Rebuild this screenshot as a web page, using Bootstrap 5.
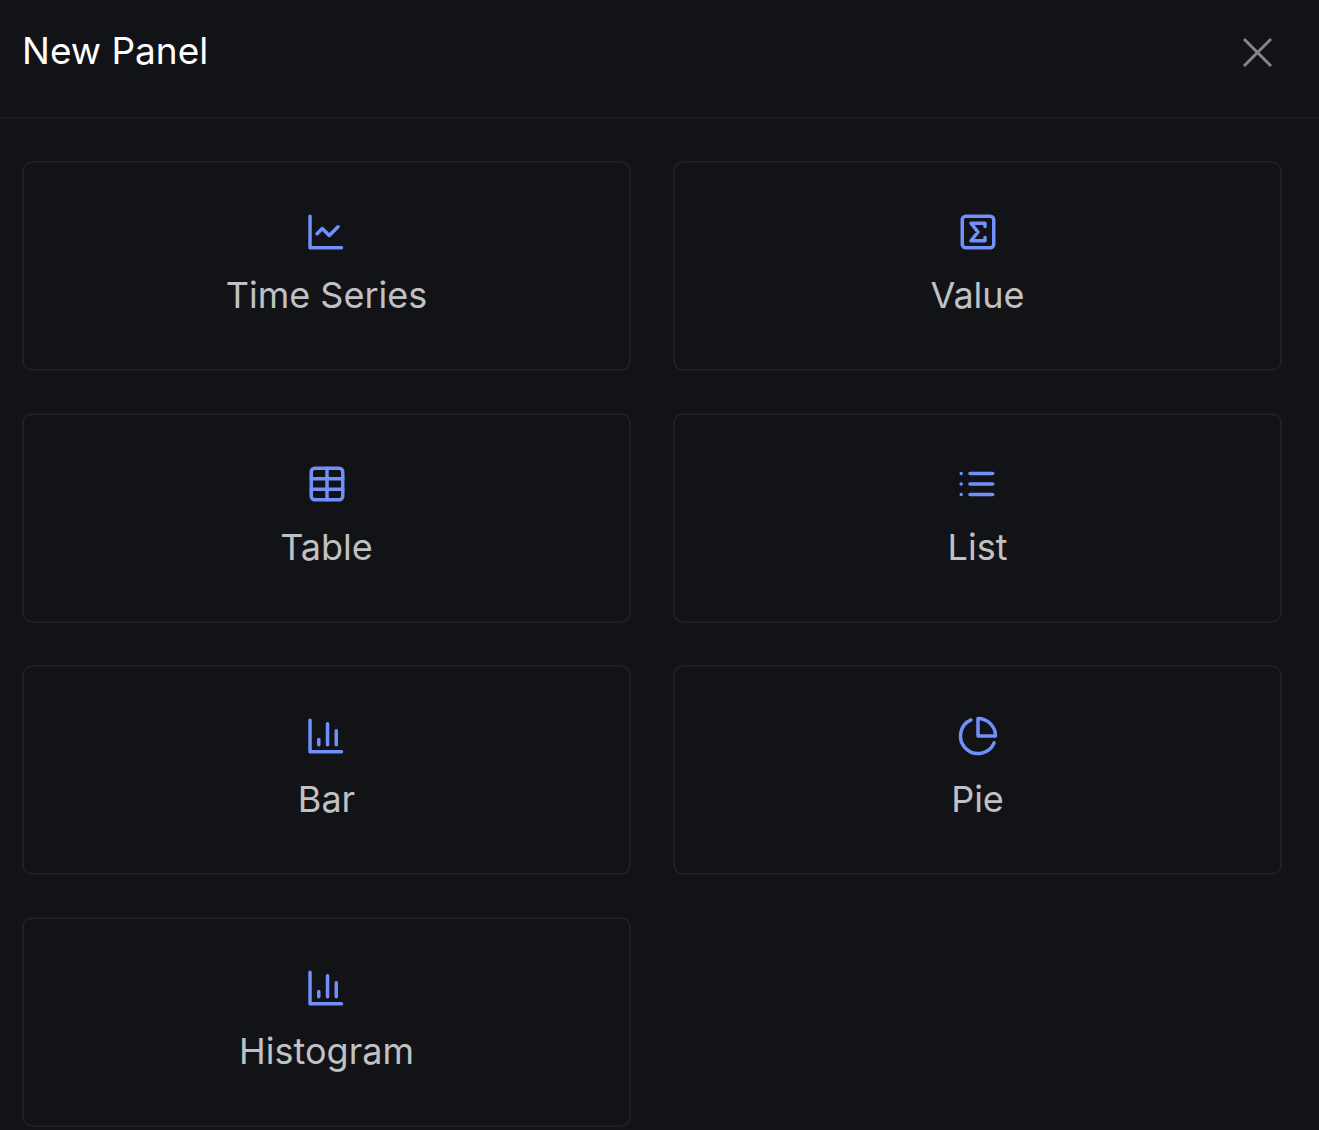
<!DOCTYPE html>
<html lang="en">
<head>
<meta charset="utf-8">
<meta name="viewport" content="width=device-width, initial-scale=1">
<title>New Panel</title>
<link href="https://cdn.jsdelivr.net/npm/bootstrap@5.3.0/dist/css/bootstrap.min.css" rel="stylesheet">
<style>
  body { background: #121317; color: #c0c1c3; font-family: Inter, sans-serif; font-size: 36px; line-height: 52px; }
  .panel-head { padding: 25px 36px 40px 22px; border-bottom: 2px solid #1b1c20; }
  .panel-title { color: #fff; font-size: 37px; line-height: 52px; font-weight: 400; }
  .close-btn { color: #85868a; padding: 8px; }
  .close-btn:hover { color: #fff; }
  .panel-grid { padding: 42px 37px 2px 22px; }
  .panel-grid .row { --bs-gutter-x: 42px; --bs-gutter-y: 42px; }
  .panel-type { border: 2px solid #1e2026; border-radius: 10px; padding: 48px 16px; gap: 16px; color: inherit; background: transparent; }
  .panel-type:hover { border-color: #7190f9; }
  .panel-type svg { color: #7190f9; }
  svg { fill: none; stroke: currentColor; stroke-width: 2; stroke-linecap: round; stroke-linejoin: round; display: block; }
  .close-btn svg { stroke-linecap: butt; stroke-width: 3; }
</style>
<script src="https://cdn.jsdelivr.net/npm/bootstrap@5.3.0/dist/js/bootstrap.bundle.min.js" defer></script>
</head>
<body>
<header class="panel-head d-flex justify-content-between align-items-center">
  <h1 class="panel-title mb-0">New Panel</h1>
  <button type="button" class="close-btn border-0 bg-transparent" aria-label="Close">
    <svg width="34" height="34" viewBox="0 0 34 34"><path d="M3 5l27 27M30 5L3 32"/></svg>
  </button>
</header>
<main class="panel-grid">
  <div class="row row-cols-2">
    <div class="col"><button type="button" class="panel-type w-100 d-flex flex-column align-items-center">
      <svg width="42" height="42" viewBox="0.7 0 24 24" aria-hidden="true"><path d="M3 3v18h18"/><path d="m19 9-5 5-4-4-3 3"/></svg>
      <span>Time Series</span></button></div>
    <div class="col"><button type="button" class="panel-type w-100 d-flex flex-column align-items-center">
      <svg width="42" height="42" viewBox="0 0 24 24" aria-hidden="true"><rect x="3" y="3" width="18" height="18" rx="2"/><path d="M16 8.9V7H8l4 5-4 5h8v-1.9"/></svg>
      <span>Value</span></button></div>
    <div class="col"><button type="button" class="panel-type w-100 d-flex flex-column align-items-center">
      <svg width="42" height="42" viewBox="0 0 24 24" aria-hidden="true"><rect x="3" y="3" width="18" height="18" rx="2"/><path d="M12 3v18M3 9h18M3 15h18"/></svg>
      <span>Table</span></button></div>
    <div class="col"><button type="button" class="panel-type w-100 d-flex flex-column align-items-center">
      <svg width="42" height="42" viewBox="0.6 0 24 24" aria-hidden="true"><path d="M8 6h13M8 12h13M8 18h13M3 6h.01M3 12h.01M3 18h.01"/></svg>
      <span>List</span></button></div>
    <div class="col"><button type="button" class="panel-type w-100 d-flex flex-column align-items-center">
      <svg width="42" height="42" viewBox="0.7 0 24 24" aria-hidden="true"><path d="M3 3v18h18M18 17V9M13 17V5M8 17v-3"/></svg>
      <span>Bar</span></button></div>
    <div class="col"><button type="button" class="panel-type w-100 d-flex flex-column align-items-center">
      <svg width="42" height="42" viewBox="0 0 24 24" aria-hidden="true"><path d="M21.21 15.89A10 10 0 1 1 8 2.83"/><path d="M22 12A10 10 0 0 0 12 2v10z"/></svg>
      <span>Pie</span></button></div>
    <div class="col"><button type="button" class="panel-type w-100 d-flex flex-column align-items-center">
      <svg width="42" height="42" viewBox="0.7 0 24 24" aria-hidden="true"><path d="M3 3v18h18M18 17V9M13 17V5M8 17v-3"/></svg>
      <span>Histogram</span></button></div>
  </div>
</main>
</body>
</html>
